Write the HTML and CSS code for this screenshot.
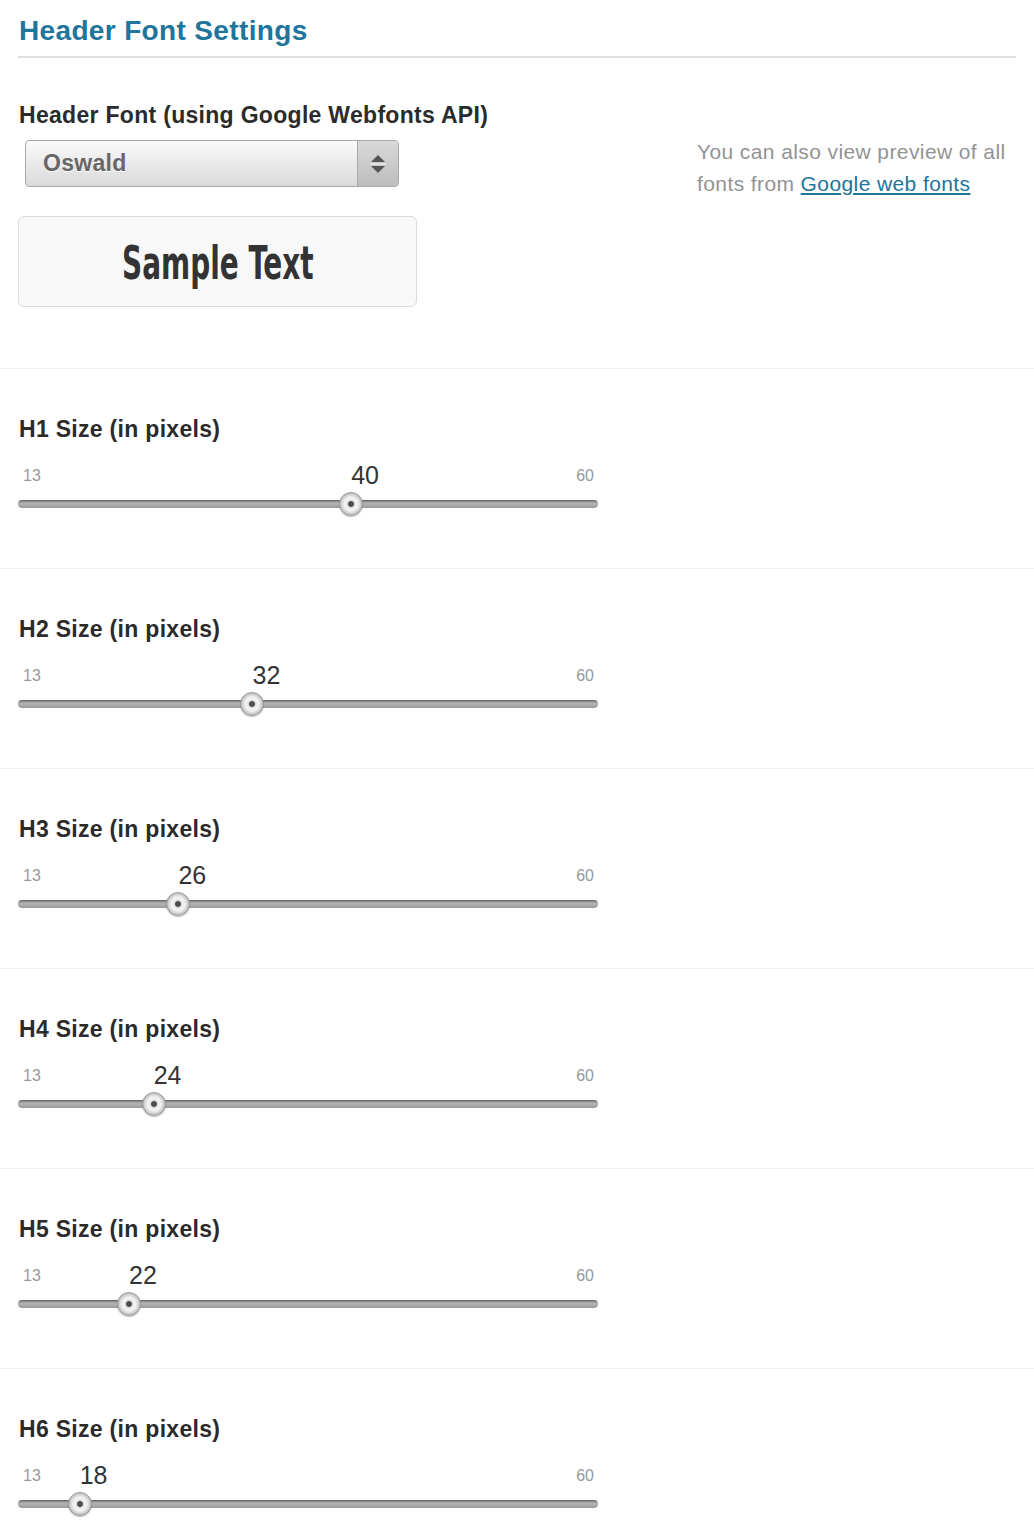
FILE: index.html
```html
<!DOCTYPE html>
<html>
<head>
<meta charset="utf-8">
<link rel="stylesheet" href="styles.css">
</head>
<body>
<div class="page-head">
  <h2 class="title">Header Font Settings</h2>
</div>

<div class="font-block">
  <div class="font-left">
    <div class="label">Header Font (using Google Webfonts API)</div>
    <div class="select">
      <span class="select-text">Oswald</span>
      <span class="select-arrows">
        <svg width="18" height="22" viewBox="0 0 18 22">
          <polygon points="9,2 16,9 2,9" fill="#555"/>
          <line x1="1" y1="11" x2="17" y2="11" stroke="#f4f4f4" stroke-width="1"/>
          <polygon points="2,13 16,13 9,20" fill="#555"/>
        </svg>
      </span>
    </div>
    <div class="sample"><span class="sample-text">Sample Text</span></div>
  </div>
  <div class="font-note">You can also view preview of all fonts from <a href="#" class="link">Google web fonts</a></div>
</div>

<div class="section">
  <div class="label">H1 Size (in pixels)</div>
  <div class="slider">
    <div class="scale"><span class="min">13</span><span class="val" style="left:57.45%">40</span><span class="max">60</span></div>
    <div class="track"><span class="handle" style="left:57.45%"></span></div>
  </div>
</div>
<div class="section">
  <div class="label">H2 Size (in pixels)</div>
  <div class="slider">
    <div class="scale"><span class="min">13</span><span class="val" style="left:40.43%">32</span><span class="max">60</span></div>
    <div class="track"><span class="handle" style="left:40.43%"></span></div>
  </div>
</div>
<div class="section">
  <div class="label">H3 Size (in pixels)</div>
  <div class="slider">
    <div class="scale"><span class="min">13</span><span class="val" style="left:27.66%">26</span><span class="max">60</span></div>
    <div class="track"><span class="handle" style="left:27.66%"></span></div>
  </div>
</div>
<div class="section">
  <div class="label">H4 Size (in pixels)</div>
  <div class="slider">
    <div class="scale"><span class="min">13</span><span class="val" style="left:23.4%">24</span><span class="max">60</span></div>
    <div class="track"><span class="handle" style="left:23.4%"></span></div>
  </div>
</div>
<div class="section">
  <div class="label">H5 Size (in pixels)</div>
  <div class="slider">
    <div class="scale"><span class="min">13</span><span class="val" style="left:19.15%">22</span><span class="max">60</span></div>
    <div class="track"><span class="handle" style="left:19.15%"></span></div>
  </div>
</div>
<div class="section">
  <div class="label">H6 Size (in pixels)</div>
  <div class="slider">
    <div class="scale"><span class="min">13</span><span class="val" style="left:10.64%">18</span><span class="max">60</span></div>
    <div class="track"><span class="handle" style="left:10.64%"></span></div>
  </div>
</div>
</body>
</html>
```

FILE: styles.css
```css
html, body {
  margin: 0;
  padding: 0;
  background: #fff;
  font-family: "Liberation Sans", Arial, sans-serif;
  color: #333;
}

.page-head {
  margin: 0 18px;
  padding-top: 15px;
  padding-bottom: 9px;
  border-bottom: 2px solid #e0e0e0;
}

.title {
  margin: 0 0 0 1px;
  font-size: 28px;
  line-height: 32px;
  letter-spacing: 0.35px;
  font-weight: bold;
  color: #21759b;
}

.font-block {
  display: flex;
  padding: 44px 18px 0;
  height: 266px;
  border-bottom: 1px solid #f1f1f1;
}

.font-left {
  width: 679px;
  flex-shrink: 0;
}

.label {
  margin-left: 1px;
  font-size: 23px;
  line-height: 26px;
  letter-spacing: 0.3px;
  font-weight: bold;
  color: #2b2b2b;
}

.select {
  margin: 12px 0 0 7px;
  width: 374px;
  height: 47px;
  box-sizing: border-box;
  border: 1px solid #a9a9a9;
  border-radius: 4px;
  background: linear-gradient(#fafafa, #dadada);
  display: flex;
  align-items: center;
  overflow: hidden;
}

.select-text {
  flex: 1;
  padding-left: 17px;
  font-size: 23px;
  letter-spacing: 0.3px;
  font-weight: bold;
  color: #666;
  text-shadow: 0 1px 0 #fff;
}

.select-arrows {
  width: 40px;
  height: 100%;
  border-left: 1px solid #a9a9a9;
  background: linear-gradient(#d9d9d9, #bdbdbd);
  display: flex;
  align-items: center;
  justify-content: center;
}

.sample {
  margin-top: 29px;
  width: 399px;
  height: 91px;
  box-sizing: border-box;
  border: 1px solid #dcdcdc;
  border-radius: 6px;
  background: #f8f8f8;
  display: flex;
  align-items: center;
  justify-content: center;
}

.sample-text {
  font-family: "DejaVu Sans Condensed", "DejaVu Sans", sans-serif;
  font-stretch: condensed;
  font-weight: bold;
  font-size: 46px;
  color: #333;
  display: inline-block;
  transform: scaleX(0.675);
  margin-top: 2px;
}

.font-note {
  flex: 1;
  min-width: 0;
  margin-top: 34px;
  font-size: 21px;
  letter-spacing: 0.4px;
  line-height: 32px;
  color: #939393;
}

.link {
  color: #21759b;
  text-decoration: underline;
}

.section {
  height: 200px;
  box-sizing: border-box;
  padding: 47px 18px 0;
  border-bottom: 1px solid #f1f1f1;
}

.slider {
  width: 580px;
  margin-top: 19px;
}

.scale {
  position: relative;
  height: 30px;
  display: flex;
  align-items: center;
  justify-content: space-between;
  padding: 0 4px 0 5px;
}

.min, .max {
  font-size: 16px;
  color: #999;
}

.val {
  position: absolute;
  top: 50%;
  transform: translateY(-52%);
  font-size: 25px;
  color: #333;
}

.track {
  position: relative;
  margin-top: 9px;
  height: 8px;
  border-radius: 4px;
  background: linear-gradient(#7a7a7a, #b5b5b5 45%, #9a9a9a);
  box-shadow: inset 0 1px 1px rgba(0,0,0,0.2);
}

.handle {
  position: absolute;
  top: 50%;
  width: 22px;
  height: 22px;
  transform: translate(-50%, -50%);
  border-radius: 50%;
  border: 1px solid #9a9a9a;
  background: radial-gradient(circle at 50% 50%, #444 0, #555 2.5px, #ddd 3.5px, #f6f6f6 6px, #e4e4e4 8px, #bdbdbd 11px);
  box-shadow: 0 1px 1px rgba(0,0,0,0.25);
}
```
